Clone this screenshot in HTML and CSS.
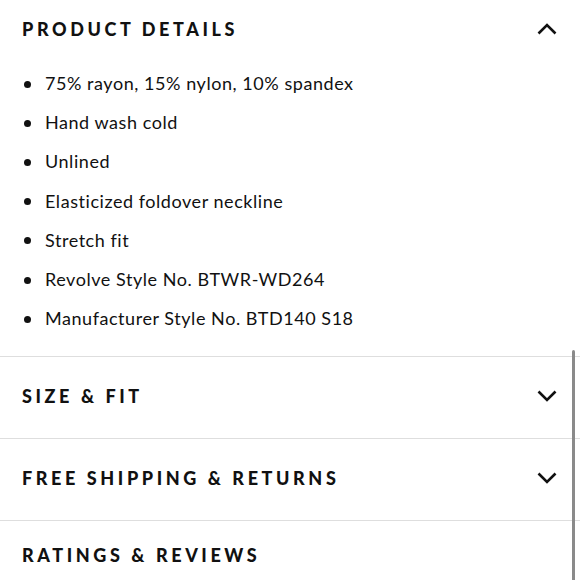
FILE: index.html
```html
<!DOCTYPE html>
<html>
<head>
<meta charset="utf-8">
<link rel="stylesheet" href="styles.css">
</head>
<body>
<div class="page">
  <section class="panel panel--open">
    <div class="panel-head">
      <h2 class="panel-title">PRODUCT DETAILS</h2>
      <svg class="chev" width="20" height="12" viewBox="0 0 20 12"><path d="M1.5 10.5 L10 2 L18.5 10.5" fill="none" stroke="#111" stroke-width="2.6"/></svg>
    </div>
    <ul class="details">
      <li>75% rayon, 15% nylon, 10% spandex</li>
      <li>Hand wash cold</li>
      <li>Unlined</li>
      <li>Elasticized foldover neckline</li>
      <li>Stretch fit</li>
      <li>Revolve Style No. BTWR-WD264</li>
      <li>Manufacturer Style No. BTD140 S18</li>
    </ul>
  </section>
  <section class="panel">
    <div class="panel-head">
      <h2 class="panel-title">SIZE &amp; FIT</h2>
      <svg class="chev" width="20" height="12" viewBox="0 0 20 12"><path d="M1.5 1.5 L10 10 L18.5 1.5" fill="none" stroke="#111" stroke-width="2.6"/></svg>
    </div>
  </section>
  <section class="panel">
    <div class="panel-head">
      <h2 class="panel-title">FREE SHIPPING &amp; RETURNS</h2>
      <svg class="chev" width="20" height="12" viewBox="0 0 20 12"><path d="M1.5 1.5 L10 10 L18.5 1.5" fill="none" stroke="#111" stroke-width="2.6"/></svg>
    </div>
  </section>
  <section class="panel panel--last">
    <div class="panel-head">
      <h2 class="panel-title">RATINGS &amp; REVIEWS</h2>
    </div>
  </section>
  <div class="scroll-thumb"></div>
</div>
</body>
</html>
```
FILE: styles.css
```css
html, body {
  margin: 0;
  padding: 0;
  background: #fff;
}
body {
  font-family: Lato, "Liberation Sans", sans-serif;
  color: #111;
  overflow: hidden;
}
.page {
  position: relative;
  width: 580px;
  height: 580px;
  overflow: hidden;
}
.panel {
  border-top: 1px solid #dedede;
}
.panel--open {
  border-top: none;
  padding-bottom: 18px;
}
.panel-head {
  box-sizing: border-box;
  display: flex;
  align-items: center;
  justify-content: space-between;
  height: 81px;
  padding: 0 23px 3px 22px;
}
.panel--open .panel-head {
  height: 58px;
  padding-bottom: 0;
}
.panel--last .panel-head {
  height: 70px;
}
.panel-title {
  margin: 0;
  font-size: 18px;
  font-weight: 900;
  letter-spacing: 3.6px;
  line-height: 1;
}
.chev {
  display: block;
}
.details {
  list-style: none;
  margin: 6px 0 0;
  padding: 0 22px;
}
.details li {
  position: relative;
  height: 39.2px;
  line-height: 39.2px;
  padding-left: 23px;
  font-size: 18px;
  letter-spacing: 0.55px;
}
.details li::before {
  content: "";
  position: absolute;
  left: 2px;
  top: 50%;
  width: 7px;
  height: 7px;
  margin-top: -3px;
  border-radius: 50%;
  background: #111;
}
.scroll-thumb {
  position: absolute;
  right: 5px;
  top: 350px;
  width: 3px;
  height: 240px;
  border-radius: 2px;
  background: #8a8a8a;
}
```
